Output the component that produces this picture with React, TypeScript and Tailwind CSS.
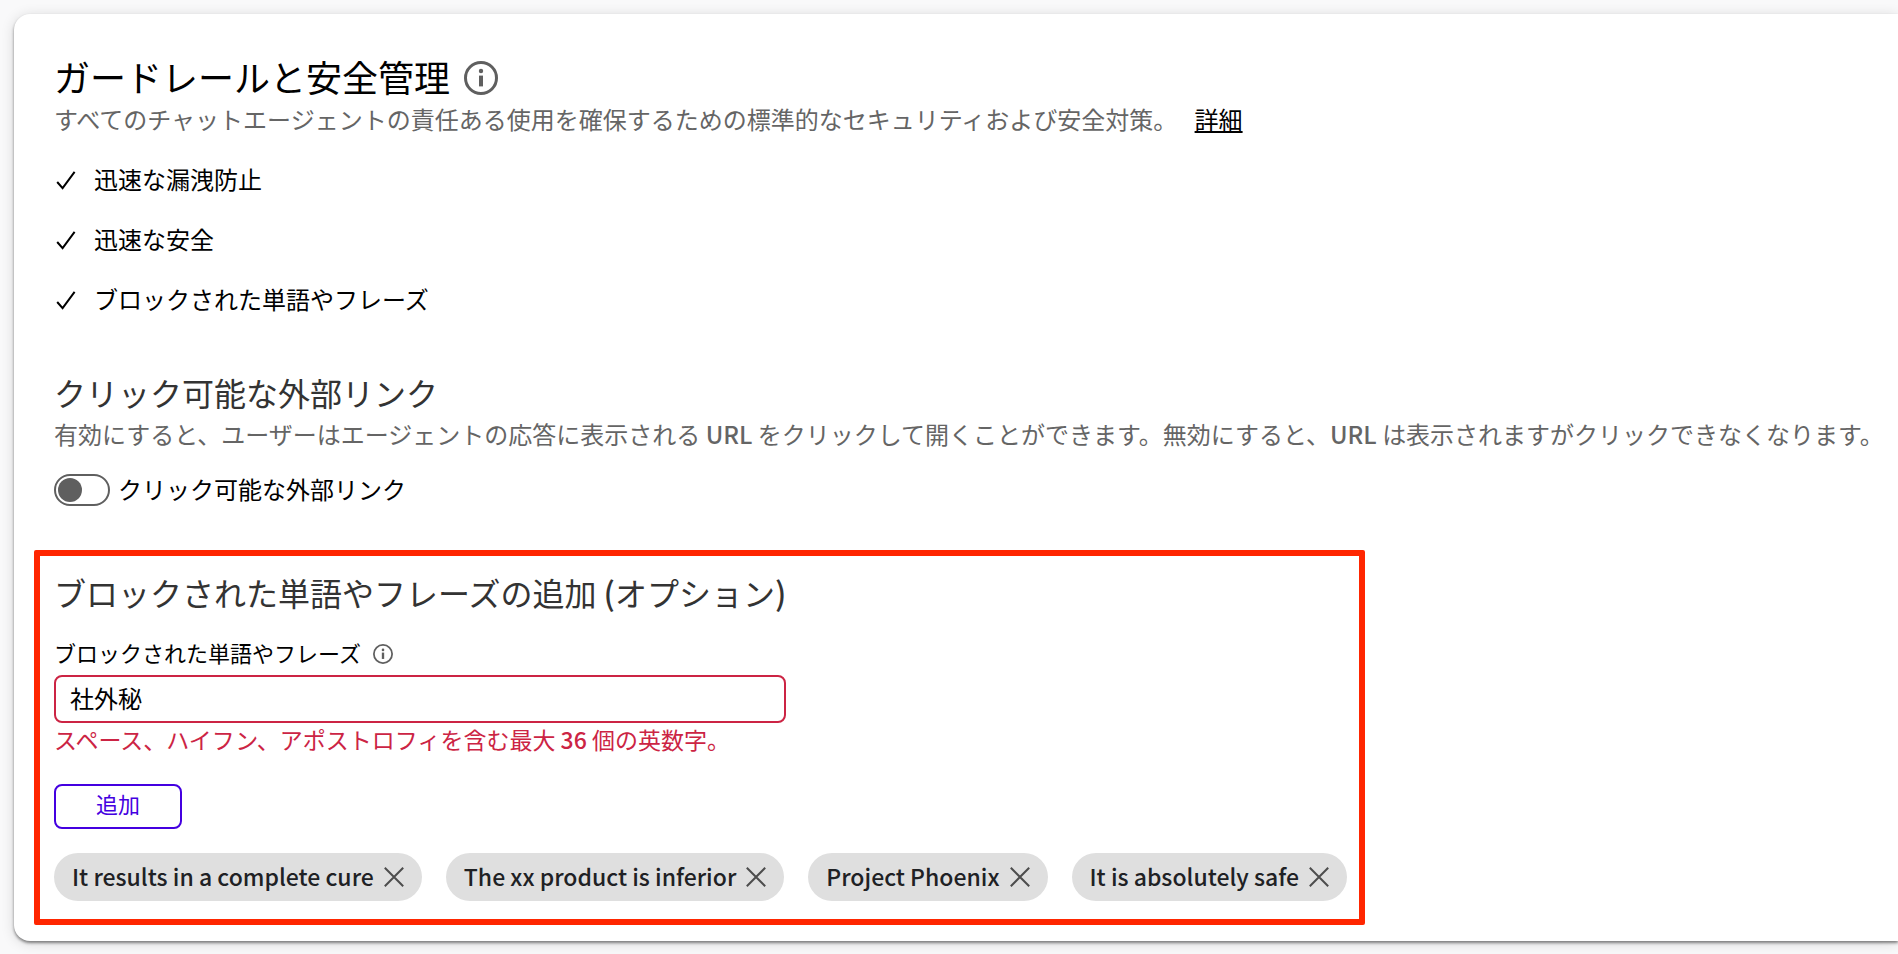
import { useState } from "react";

const checks = ["迅速な漏洩防止", "迅速な安全", "ブロックされた単語やフレーズ"];

function InfoIcon({ className }: { className: string }) {
  return (
    <svg viewBox="0 0 34 34" className={className} fill="none" aria-hidden="true">
      <circle cx="17" cy="17" r="15.5" stroke="currentColor" strokeWidth="3" />
      <circle cx="17" cy="10" r="2.2" fill="currentColor" />
      <path d="M17 14.6V25.4" stroke="currentColor" strokeWidth="4" />
    </svg>
  );
}

function CheckIcon() {
  return (
    <svg viewBox="0 0 24 24" className="mt-0.5 size-6 shrink-0" fill="none" aria-hidden="true">
      <path d="M3.2 14L8.6 20.2L20.6 3.8" stroke="currentColor" strokeWidth="2" />
    </svg>
  );
}

function CloseIcon() {
  return (
    <svg viewBox="0 0 20 20" className="size-5" fill="none" aria-hidden="true">
      <path d="M0.8 0.8L19.2 19.2M19.2 0.8L0.8 19.2" stroke="currentColor" strokeWidth="2" />
    </svg>
  );
}

export default function App() {
  const [linksEnabled, setLinksEnabled] = useState(false);
  const [word, setWord] = useState("社外秘");
  const [phrases, setPhrases] = useState([
    "It results in a complete cure",
    "The xx product is inferior",
    "Project Phoenix",
    "It is absolutely safe",
  ]);

  return (
    <div
      lang="ja"
      className="min-h-screen overflow-x-hidden bg-[#f9f9fa] pt-[14px] pl-[14px] font-['Noto_Sans_CJK_JP',sans-serif] text-2xl leading-9 text-black"
    >
      <main className="rounded-l-2xl bg-white pt-10 pb-4 pl-10 shadow-[0_2px_3px_rgba(0,0,0,0.45),0_2px_14px_rgba(0,0,0,0.14)]">
        <section>
          <div className="flex items-center gap-[14px]">
            <h1 className="pb-[3px] text-4xl leading-[44px]">ガードレールと安全管理</h1>
            <button type="button" aria-label="情報" className="text-[#5f5f5f]">
              <InfoIcon className="size-[34px]" />
            </button>
          </div>
          <p className="text-[#656565]">
            すべてのチャットエージェントの責任ある使用を確保するための標準的なセキュリティおよび安全対策。{" "}
            <a href="#details" className="ml-3 text-black underline decoration-2 underline-offset-2">
              詳細
            </a>
          </p>
          <ul className="mt-6 flex flex-col gap-6">
            {checks.map((item) => (
              <li key={item} className="flex items-center gap-4">
                <CheckIcon />
                <span>{item}</span>
              </li>
            ))}
          </ul>
        </section>

        <section className="mt-[51px]">
          <h2 className="text-[32px] leading-[48px] text-[#333]">クリック可能な外部リンク</h2>
          <p className="text-[#656565]">
            有効にすると、ユーザーはエージェントの応答に表示される <span className="font-medium">URL</span>{" "}
            をクリックして開くことができます。無効にすると、<span className="font-medium">URL</span>{" "}
            は表示されますがクリックできなくなります。
          </p>
          <label className="mt-[19px] flex w-fit items-center gap-2">
            <input
              type="checkbox"
              role="switch"
              checked={linksEnabled}
              onChange={(e) => setLinksEnabled(e.target.checked)}
              className="mt-0.5 flex h-8 w-14 appearance-none items-center rounded-full border-2 border-[#5f5f5f] bg-white px-0.5 before:size-6 before:rounded-full before:bg-[#5f5f5f] before:content-[''] checked:justify-end"
            />
            <span>クリック可能な外部リンク</span>
          </label>
        </section>

        <section className="mt-[43px] -ml-5 w-fit rounded-xs border-6 border-[#ff2600] pt-3 pr-3 pb-[18px] pl-[14px]">
          <h2 className="text-[32px] leading-[48px] text-[#333]">
            ブロックされた単語やフレーズの追加 <span className="font-medium">(</span>オプション
            <span className="font-medium">)</span>
          </h2>
          <div className="mt-5 flex items-center gap-3 text-[22px] leading-8">
            <label htmlFor="blocked-word">ブロックされた単語やフレーズ</label>
            <button type="button" aria-label="情報" className="mt-1 text-[#5f5f5f]">
              <InfoIcon className="size-5" />
            </button>
          </div>
          <input
            id="blocked-word"
            type="text"
            value={word}
            onChange={(e) => setWord(e.target.value)}
            aria-invalid="true"
            aria-describedby="blocked-word-error"
            className="mt-[7px] block h-12 w-[732px] rounded-lg border-2 border-[#cc2444] bg-white px-[14px] pb-1 outline-none"
          />
          <p id="blocked-word-error" className="text-[23px] leading-8 text-[#cc2444]">
            スペース、ハイフン、アポストロフィを含む最大 <span className="font-medium">36</span> 個の英数字。
          </p>
          <button
            type="button"
            className="mt-[29px] flex h-[45px] w-32 items-center justify-center rounded-lg border-2 border-[#4400e0] pb-2 text-[22px] leading-8 text-[#4400e0]"
          >
            追加
          </button>
          <ul className="mt-6 flex flex-wrap gap-6">
            {phrases.map((phrase) => (
              <li
                key={phrase}
                className="flex h-12 items-center gap-2.5 rounded-full bg-[#dfdfdf] px-[18px] text-[23px] font-medium text-[#202124]"
              >
                <span className="pb-0.5">{phrase}</span>
                <button
                  type="button"
                  aria-label="削除"
                  onClick={() => setPhrases(phrases.filter((p) => p !== phrase))}
                  className="text-[#4d4d4d]"
                >
                  <CloseIcon />
                </button>
              </li>
            ))}
          </ul>
        </section>
      </main>
    </div>
  );
}
